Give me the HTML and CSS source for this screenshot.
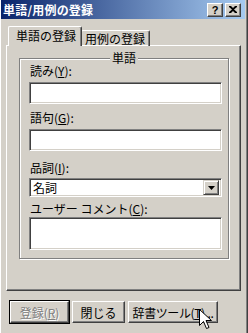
FILE: index.html
```html
<!DOCTYPE html>
<html lang="ja">
<head>
    <meta charset="UTF-8">
    <title>単語/用例の登録</title>
    <link rel="stylesheet" href="styles.css">
</head>
<body>
    <div class="window">
        <div class="titlebar">
            <span class="title">単語/用例の登録</span>
            <div class="caption-buttons">
                <span class="cap-btn">?</span>
                <span class="cap-btn close">
                    <svg width="8" height="7" viewBox="0 0 8 7"><path d="M0 0h2l2 2 2-2h2v1l-3 2.5 3 2.5v1h-2l-2-2-2 2h-2v-1l3-2.5-3-2.5z" fill="#000"/></svg>
                </span>
            </div>
        </div>

        <div class="content">
            <div class="tabs">
                <div class="tab active">単語の登録</div>
                <div class="tab">用例の登録</div>
            </div>

            <div class="panel">
                <div class="group">
                    <span class="legend">単語</span>

                    <label class="lbl first">読み(<u>Y</u>):</label>
                    <div class="field"></div>

                    <label class="lbl second">語句(<u>G</u>):</label>
                    <div class="field"></div>

                    <label class="lbl third">品詞(<u>I</u>):</label>
                    <div class="combo">
                        <span class="combo-text">名詞</span>
                        <span class="combo-btn">
                            <svg width="7" height="4" viewBox="0 0 7 4"><path d="M0 0h7l-3.5 4z" fill="#000"/></svg>
                        </span>
                    </div>

                    <label class="lbl fourth">ユーザー コメント(<u>C</u>):</label>
                    <div class="field memo"></div>
                </div>
            </div>

            <div class="buttons">
                <button class="btn default disabled">登録(<u>R</u>)</button>
                <button class="btn close-btn">閉じる</button>
                <button class="btn tool-btn">辞書ツール(<u>T</u>)...</button>
            </div>
        </div>

        <svg class="cursor" width="13" height="21" viewBox="0 0 13 21">
            <path d="M0.5 0.5v16l4-4 3 7 2.5-1-3-7h5.5z" fill="#fff" stroke="#000" stroke-width="1"/>
        </svg>
    </div>
</body>
</html>
```

FILE: styles.css
```css
body {
    margin: 0;
    padding: 0;
    background-color: #d4d0c8;
    font-family: "Noto Sans CJK JP", "DejaVu Sans", sans-serif;
    font-size: 12px;
    color: #000;
}
.window {
    position: relative;
    width: 248px;
    height: 333px;
    box-sizing: border-box;
    border-left: 1px solid #fff;
    border-right: 1px solid #404040;
    box-shadow: inset -1px 0 0 #808080;
    background-color: #d4d0c8;
    overflow: hidden;
}
.titlebar {
    display: flex;
    align-items: center;
    justify-content: space-between;
    height: 19px;
    margin-right: 2px;
    padding: 0 4px 0 2px;
    background: linear-gradient(to right, #0a246a, #a6caf0);
    color: #fff;
}
.title {
    font-weight: bold;
    font-size: 12px;
    line-height: 19px;
    letter-spacing: 0.2px;
}
.caption-buttons {
    display: flex;
    gap: 2px;
}
.cap-btn {
    display: flex;
    align-items: center;
    justify-content: center;
    width: 16px;
    height: 14px;
    box-sizing: border-box;
    background-color: #d4d0c8;
    color: #000;
    font-family: "Liberation Sans", sans-serif;
    font-weight: bold;
    font-size: 11px;
    border-top: 1px solid #fff;
    border-left: 1px solid #fff;
    border-right: 1px solid #404040;
    border-bottom: 1px solid #404040;
    box-shadow: inset -1px -1px 0 #808080;
}
.content {
    padding: 7px 0 0 5px;
}
.tabs {
    display: flex;
    align-items: flex-end;
    height: 19px;
    padding-left: 2px;
}
.tab {
    height: 16px;
    line-height: 16px;
    padding: 0 4px 0 3px;
    box-sizing: border-box;
    white-space: nowrap;
    border-top: 1px solid #fff;
    border-left: 1px solid #fff;
    border-right: 1px solid #404040;
    box-shadow: inset -1px 0 0 #808080;
    border-radius: 2px 2px 0 0;
    position: relative;
    top: 1px;
}
.tab.active {
    height: 20px;
    line-height: 18px;
    padding: 0 5px 0 7px;
    margin-right: -1px;
    background-color: #d4d0c8;
    z-index: 1;
    top: 1px;
}
.panel {
    width: 235px;
    height: 246px;
    box-sizing: border-box;
    padding: 12px 0 0 12px;
    border-top: 1px solid #fff;
    border-left: 1px solid #fff;
    border-right: 1px solid #404040;
    border-bottom: 1px solid #404040;
    box-shadow: inset -1px -1px 0 #808080;
}
.group {
    position: relative;
    display: flex;
    flex-direction: column;
    width: 210px;
    height: 201px;
    box-sizing: border-box;
    padding: 5px 6px 0 9px;
    border: 1px solid #808080;
    box-shadow: inset 1px 1px 0 #fff, 1px 1px 0 #fff;
}
.legend {
    position: absolute;
    top: -8px;
    left: 90px;
    padding: 0 2px;
    background-color: #d4d0c8;
    line-height: 14px;
}
.lbl {
    display: block;
    height: 14px;
    line-height: 14px;
    padding-left: 1px;
    white-space: nowrap;
}
.lbl.second { margin-top: 7px; }
.lbl.third { margin-top: 10px; }
.lbl.fourth { margin-top: 5px; }
.lbl.first, .lbl.second { margin-bottom: 4px; }
.lbl.third { margin-bottom: 3px; }
.lbl.fourth { margin-bottom: 1px; }
.field, .combo {
    width: 193px;
    height: 22px;
    box-sizing: border-box;
    background-color: #fff;
    border-top: 1px solid #808080;
    border-left: 1px solid #808080;
    border-right: 1px solid #fff;
    border-bottom: 1px solid #fff;
    box-shadow: inset 1px 1px 0 #404040, inset -1px -1px 0 #d4d0c8;
}
.memo {
    height: 33px;
}
.combo {
    display: flex;
    justify-content: space-between;
    align-items: center;
    height: 19px;
    padding: 2px;
}
.combo-text {
    line-height: 14px;
    padding-left: 1px;
}
.combo-btn {
    display: flex;
    align-items: center;
    justify-content: center;
    width: 16px;
    height: 15px;
    box-sizing: border-box;
    background-color: #d4d0c8;
    border-top: 1px solid #d4d0c8;
    border-left: 1px solid #d4d0c8;
    border-right: 1px solid #404040;
    border-bottom: 1px solid #404040;
    box-shadow: inset 1px 1px 0 #fff, inset -1px -1px 0 #808080;
}
.buttons {
    display: flex;
    gap: 3px;
    margin-top: 10px;
    padding-left: 4px;
}
.btn {
    height: 22px;
    padding: 0;
    box-sizing: border-box;
    white-space: nowrap;
    background-color: #d4d0c8;
    font-family: "Noto Sans CJK JP", sans-serif;
    font-size: 12px;
    color: #000;
    border-top: 1px solid #fff;
    border-left: 1px solid #fff;
    border-right: 1px solid #404040;
    border-bottom: 1px solid #404040;
    box-shadow: inset -1px -1px 0 #808080;
}
.btn.default {
    width: 59px;
    outline: 1px solid #000;
    outline-offset: 0;
}
.btn.disabled {
    color: #808080;
    text-shadow: 1px 1px 0 #fff;
}
.close-btn {
    width: 53px;
}
.tool-btn {
    width: 90px;
    letter-spacing: -0.4px;
}
.cursor {
    position: absolute;
    left: 198px;
    top: 309px;
}
```
